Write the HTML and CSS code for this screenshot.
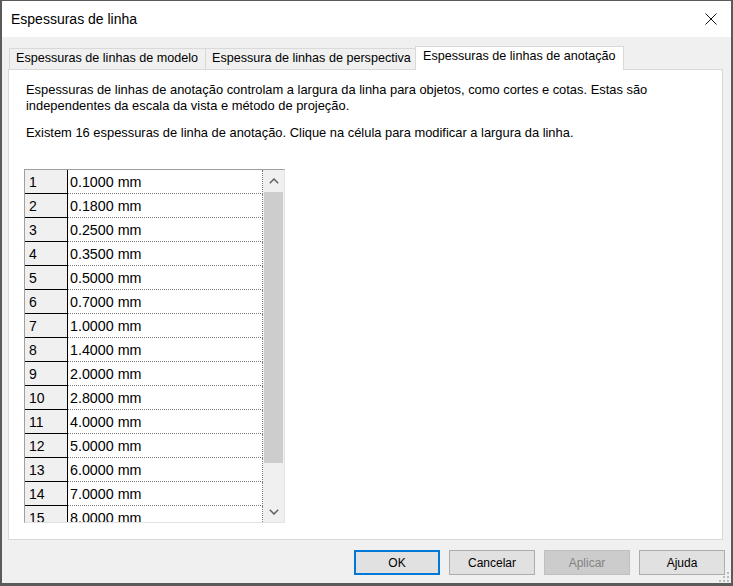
FILE: index.html
```html
<!DOCTYPE html>
<html lang="pt">
<head>
<meta charset="utf-8">
<title>Espessuras de linha</title>
<link rel="stylesheet" href="styles.css">
</head>
<body>
<div class="window">
  <div class="titlebar">
    <span class="title">Espessuras de linha</span>
    <svg class="close" width="12" height="12" viewBox="0 0 12 12"><path d="M0.5 0.5 L11.5 11.5 M11.5 0.5 L0.5 11.5" stroke="#111" stroke-width="1" fill="none"/></svg>
  </div>
  <div class="content">
    <div class="tabs">
      <div class="tab t1">Espessuras de linhas de modelo</div>
      <div class="tab t2">Espessura de linhas de perspectiva</div>
      <div class="tab t3 active">Espessuras de linhas de anotação</div>
    </div>
    <div class="panel">
      <p class="desc">Espessuras de linhas de anotação controlam a largura da linha para objetos, como cortes e cotas. Estas são independentes da escala da vista e método de projeção.</p>
      <p class="desc">Existem 16 espessuras de linha de anotação. Clique na célula para modificar a largura da linha.</p>
      <div class="grid">
        <div class="rows">
          <div class="row"><div class="idx">1</div><div class="val">0.1000 mm</div></div>
          <div class="row"><div class="idx">2</div><div class="val">0.1800 mm</div></div>
          <div class="row"><div class="idx">3</div><div class="val">0.2500 mm</div></div>
          <div class="row"><div class="idx">4</div><div class="val">0.3500 mm</div></div>
          <div class="row"><div class="idx">5</div><div class="val">0.5000 mm</div></div>
          <div class="row"><div class="idx">6</div><div class="val">0.7000 mm</div></div>
          <div class="row"><div class="idx">7</div><div class="val">1.0000 mm</div></div>
          <div class="row"><div class="idx">8</div><div class="val">1.4000 mm</div></div>
          <div class="row"><div class="idx">9</div><div class="val">2.0000 mm</div></div>
          <div class="row"><div class="idx">10</div><div class="val">2.8000 mm</div></div>
          <div class="row"><div class="idx">11</div><div class="val">4.0000 mm</div></div>
          <div class="row"><div class="idx">12</div><div class="val">5.0000 mm</div></div>
          <div class="row"><div class="idx">13</div><div class="val">6.0000 mm</div></div>
          <div class="row"><div class="idx">14</div><div class="val">7.0000 mm</div></div>
          <div class="row"><div class="idx">15</div><div class="val">8.0000 mm</div></div>
          <div class="row"><div class="idx">16</div><div class="val">10.0000 mm</div></div>
        </div>
        <div class="scrollbar">
          <div class="sb-btn"><svg width="10" height="6" viewBox="0 0 10 6"><polyline points="0.8,5.2 5,1 9.2,5.2" fill="none" stroke="#606060" stroke-width="1.5"/></svg></div>
          <div class="sb-track"><div class="sb-thumb"></div></div>
          <div class="sb-btn"><svg width="10" height="6" viewBox="0 0 10 6"><polyline points="0.8,0.8 5,5 9.2,0.8" fill="none" stroke="#606060" stroke-width="1.5"/></svg></div>
        </div>
      </div>
    </div>
    <div class="buttons">
      <button class="btn btn-default">OK</button>
      <button class="btn">Cancelar</button>
      <button class="btn btn-disabled">Aplicar</button>
      <button class="btn">Ajuda</button>
    </div>
  </div>
  <svg class="grip" width="11" height="11" viewBox="0 0 11 11">
    <rect x="8" y="0" width="2" height="2" fill="#bcbcbc"/>
    <rect x="4" y="4" width="2" height="2" fill="#bcbcbc"/>
    <rect x="8" y="4" width="2" height="2" fill="#bcbcbc"/>
    <rect x="0" y="8" width="2" height="2" fill="#bcbcbc"/>
    <rect x="4" y="8" width="2" height="2" fill="#bcbcbc"/>
    <rect x="8" y="8" width="2" height="2" fill="#bcbcbc"/>
  </svg>
</div>
</body>
</html>
```
FILE: styles.css
```css
html, body {
  margin: 0;
  padding: 0;
}
body {
  width: 733px;
  height: 586px;
  overflow: hidden;
  font-family: "Liberation Sans", Arial, sans-serif;
  color: #000;
}
.window {
  box-sizing: border-box;
  width: 733px;
  height: 586px;
  border-style: solid;
  border-color: #5a5a5a;
  border-width: 1px 2px 3px 2px;
  display: flex;
  flex-direction: column;
  position: relative;
  background: #f0f0f0;
}
.titlebar {
  height: 36px;
  flex: 0 0 36px;
  background: #fff;
  display: flex;
  align-items: center;
  justify-content: space-between;
  padding: 0 14px 0 9px;
}
.title {
  font-size: 14px;
}
.close {
  display: block;
}
.content {
  flex: 1;
  padding: 9px 8px 0 6px;
}
.tabs {
  display: flex;
  align-items: flex-end;
  height: 23px;
  padding-left: 1px;
}
.tab {
  box-sizing: border-box;
  height: 21px;
  border: 1px solid #d9d9d9;
  border-bottom: 0;
  background: #f0f0f0;
  font-size: 12.6px;
  line-height: 19px;
  padding-left: 6px;
  white-space: nowrap;
  overflow: hidden;
}
.tab + .tab {
  margin-left: -1px;
}
.t1 { width: 197px; }
.t2 { width: 211px; }
.t3 { width: 209px; }
.tab.active {
  height: 24px;
  margin-bottom: -1px;
  background: #fff;
  position: relative;
  z-index: 1;
  padding-left: 7px;
}
.panel {
  box-sizing: border-box;
  height: 471px;
  background: #fff;
  border: 1px solid #d9d9d9;
}
.desc {
  margin: 0;
  padding: 12px 17px 0 17px;
  font-size: 12.9px;
  line-height: 16px;
}
.desc + .desc {
  padding-top: 11px;
}
.grid {
  margin: 28px 0 0 15px;
  width: 261px;
  height: 354px;
  box-sizing: border-box;
  border: 1px solid;
  border-color: #a0a0a0 #e3e3e3 #e3e3e3 #a0a0a0;
  display: flex;
}
.rows {
  width: 238px;
  overflow: hidden;
}
.row {
  display: flex;
  height: 24px;
}
.idx {
  box-sizing: border-box;
  width: 43px;
  background: #f0f0f0;
  border-right: 1px solid #000;
  border-bottom: 1px solid #000;
  padding-left: 4px;
  font-size: 14px;
  line-height: 24px;
}
.val {
  box-sizing: border-box;
  width: 195px;
  border-right: 1px dotted #7a7a7a;
  border-bottom: 1px dotted #7a7a7a;
  padding-left: 2px;
  font-size: 14.3px;
  line-height: 24px;
}
.scrollbar {
  width: 21px;
  background: #f0f0f0;
  display: flex;
  flex-direction: column;
}
.sb-btn {
  height: 21px;
  flex: 0 0 21px;
  display: flex;
  align-items: center;
  justify-content: center;
}
.sb-btn svg {
  display: block;
}
.sb-track {
  flex: 1;
  padding: 1px;
}
.sb-thumb {
  height: 271px;
  background: #cdcdcd;
}
.buttons {
  display: flex;
  justify-content: flex-end;
  gap: 9px;
  margin-top: 10px;
  margin-right: -2px;
}
.btn {
  box-sizing: border-box;
  width: 86px;
  height: 25px;
  border: 1px solid #adadad;
  background: #e1e1e1;
  font-family: "Liberation Sans", Arial, sans-serif;
  font-size: 12px;
  color: #000;
  padding: 0;
  margin: 0;
  display: flex;
  align-items: center;
  justify-content: center;
}
.btn-default {
  border: 2px solid #0078d7;
}
.btn-disabled {
  background: #cccccc;
  border-color: #bfbfbf;
  color: #838383;
}
.grip {
  position: absolute;
  right: 1px;
  bottom: 0;
}
```
